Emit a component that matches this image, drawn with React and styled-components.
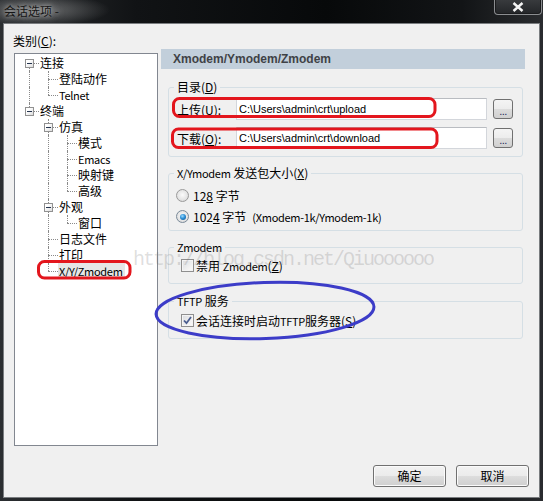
import styled, { createGlobalStyle } from "styled-components";

const GlobalStyle = createGlobalStyle`
  html, body {
    margin: 0;
    padding: 0;
  }
  body {
    width: 543px;
    height: 501px;
    overflow: hidden;
    background: #15181b;
    font-family: "Noto Sans CJK SC", "Liberation Sans", sans-serif;
    font-size: 12px;
    color: #000;
  }
`;

const treeItems = [
  { label: "连接", depth: 0, expander: true, guides: [], pos: "first" },
  { label: "登陆动作", depth: 1, guides: [true], pos: "mid" },
  { label: "Telnet", depth: 1, guides: [true], pos: "last", latin: true },
  { label: "终端", depth: 0, expander: true, guides: [], pos: "last" },
  { label: "仿真", depth: 1, expander: true, guides: [false], pos: "mid" },
  { label: "模式", depth: 2, guides: [false, true], pos: "mid" },
  { label: "Emacs", depth: 2, guides: [false, true], pos: "mid", latin: true },
  { label: "映射键", depth: 2, guides: [false, true], pos: "mid" },
  { label: "高级", depth: 2, guides: [false, true], pos: "last" },
  { label: "外观", depth: 1, expander: true, guides: [false], pos: "mid" },
  { label: "窗口", depth: 2, guides: [false, true], pos: "last" },
  { label: "日志文件", depth: 1, guides: [false], pos: "mid" },
  { label: "打印", depth: 1, guides: [false], pos: "mid" },
  { label: "X/Y/Zmodem", depth: 1, guides: [false], pos: "last", latin: true, selected: true },
];

const Window = styled.div`
  position: relative;
  width: 543px;
  height: 501px;
  display: flex;
  flex-direction: column;
  background: linear-gradient(90deg, #2b2e31 0%, #111315 25%, #07090a 60%, #121416 85%, #2a2c2f 100%);
`;

const TitleBar = styled.div`
  height: 23px;
  display: flex;
  align-items: flex-start;
  background: radial-gradient(ellipse 70px 16px at 40px 10px, rgba(200, 200, 200, 0.45), rgba(200, 200, 200, 0) 100%);
`;

const Title = styled.div`
  margin: 2px 0 0 4px;
  line-height: 17px;
  font-size: 12px;
  color: #161616;
  text-shadow: 0 0 4px rgba(220, 220, 220, 0.7), 0 0 8px rgba(200, 200, 200, 0.6);
`;

const CloseButton = styled.div`
  margin: -1px 1px 0 auto;
  width: 46px;
  height: 15px;
  border: 1px solid #8b8d90;
  border-top: none;
  border-radius: 0 0 4px 4px;
  background: linear-gradient(#3a3c3f, #232528);
  box-shadow: inset 0 0 0 1px #1a1b1d;
  display: flex;
  justify-content: center;
  align-items: center;
`;

const Client = styled.div`
  box-sizing: border-box;
  margin: 0 3px;
  width: 537px;
  height: 475px;
  border: 1px solid #7a7d80;
  background: #f0f0f0;
  display: flex;
  flex-direction: column;
  padding: 9px 0 10px 0;
`;

const Body = styled.div`
  display: flex;
  padding-left: 10px;
`;

const LeftCol = styled.div`
  width: 144px;
  display: flex;
  flex-direction: column;
`;

const CategoryLabel = styled.div`
  height: 16px;
  line-height: 16px;
  margin: 0 0 4px -1px;
`;

const Tree = styled.div`
  box-sizing: border-box;
  width: 144px;
  height: 393px;
  border: 1px solid #828790;
  background: #fff;
  padding: 1px 0 0 5px;
`;

const TreeRow = styled.div`
  display: flex;
  height: 16px;
`;

const Guide = styled.div`
  position: relative;
  width: 19px;
  height: 16px;
  flex: none;
  &::before {
    content: "";
    display: ${(p) => (p.$line ? "block" : "none")};
    position: absolute;
    left: 9px;
    top: 0;
    bottom: 0;
    border-left: 1px dotted #8a8a8a;
  }
`;

const Connector = styled.div`
  position: relative;
  width: 19px;
  height: 16px;
  flex: none;
  &::before {
    content: "";
    position: absolute;
    left: 9px;
    top: ${(p) => (p.$pos === "first" ? "8px" : "0")};
    height: ${(p) => (p.$pos === "mid" ? "16px" : "8px")};
    border-left: 1px dotted #8a8a8a;
  }
  &::after {
    content: "";
    position: absolute;
    left: 9px;
    right: 0;
    top: 8px;
    border-top: 1px dotted #8a8a8a;
  }
`;

const Expander = styled.div`
  position: absolute;
  z-index: 1;
  left: 5px;
  top: 4px;
  box-sizing: border-box;
  width: 9px;
  height: 9px;
  border: 1px solid #919191;
  background: linear-gradient(135deg, #ffffff 30%, #dcdcdc);
  &::after {
    content: "";
    position: absolute;
    left: 1px;
    top: 3px;
    width: 5px;
    height: 1px;
    background: #25344f;
  }
`;

const TreeLabel = styled.span`
  line-height: 16px;
  padding: 0 2px 0 1px;
  white-space: nowrap;
  background: ${(p) => (p.$selected ? "#e6e6e6" : "transparent")};
`;

/* Latin runs: the dialog font is narrower for Latin than for CJK */
const Lat = styled.span`
  font-size: 11px;
  letter-spacing: -0.3px;
`;

const RightCol = styled.div`
  width: 364px;
  margin: 16px 0 0 3px;
  display: flex;
  flex-direction: column;
`;

const Header = styled.div`
  height: 20px;
  line-height: 20px;
  background: #c2cfdb;
  padding-left: 12px;
  font-family: "Liberation Sans", sans-serif;
  font-weight: bold;
  font-size: 12px;
  color: #3f4246;
`;

const Group = styled.fieldset`
  margin: ${(p) => p.$top}px 2px 0 7px;
  border: 1px solid #d5dfe5;
  border-radius: 3px;
  padding: ${(p) => p.$pt}px 5px ${(p) => p.$pb}px 5px;
  min-inline-size: 0;
`;

const Legend = styled.legend`
  padding: 0 3px;
  line-height: 16px;
  font-size: 12px;
`;

const Mn = styled.span`
  text-decoration: underline;
`;

const PathRow = styled.div`
  display: flex;
  align-items: center;
  height: 22px;
  padding-left: 3px;
  & + & {
    margin-top: 7px;
  }
`;

const PathLabel = styled.div`
  width: 59px;
  flex: none;
`;

const PathInput = styled.input`
  box-sizing: border-box;
  width: 251px;
  height: 22px;
  margin: 0;
  border: 1px solid #d3d6db;
  border-top-color: #b9bcc1;
  padding: 0 0 0 2px;
  background: #fff;
  font-family: "Liberation Sans", sans-serif;
  font-size: 11px;
  color: #000;
  outline: none;
`;

const BrowseButton = styled.div`
  box-sizing: border-box;
  width: 20px;
  height: 20px;
  margin-left: 6px;
  border: 1px solid #707070;
  border-radius: 3px;
  background: linear-gradient(#f4f4f4 0%, #ececec 50%, #dcdcdc 51%, #d0d0d0 100%);
  display: flex;
  justify-content: center;
  align-items: flex-end;
  font-family: "Liberation Sans", sans-serif;
  font-size: 11px;
  line-height: 14px;
  letter-spacing: -0.5px;
  color: #1b2a5a;
`;

const OptionRow = styled.div`
  display: flex;
  align-items: center;
  height: ${(p) => p.$h}px;
  padding-left: ${(p) => p.$indent}px;
  gap: ${(p) => p.$gap}px;
  white-space: nowrap;
`;

const Radio = styled.div`
  position: relative;
  box-sizing: border-box;
  width: 13px;
  height: 13px;
  border-radius: 50%;
  border: 1px solid ${(p) => (p.$checked ? "#7a8a99" : "#9a9a9a")};
  background: radial-gradient(circle at 50% 45%, #fbfbfb 0%, #e6e6e6 55%, #cfcfcf 100%);
  &::after {
    content: "";
    display: ${(p) => (p.$checked ? "block" : "none")};
    position: absolute;
    left: 2.5px;
    top: 2.5px;
    width: 6px;
    height: 6px;
    border-radius: 50%;
    background: radial-gradient(circle at 40% 35%, #9fdcff 0%, #2b8fd6 45%, #0d4b86 100%);
  }
`;

const Check = styled.div`
  box-sizing: border-box;
  width: 13px;
  height: 13px;
  border: 1px solid #8f8f8f;
  background: linear-gradient(135deg, #d9dbdf 0%, #f3f3f3 70%, #fbfbfb 100%);
  box-shadow: inset 0 0 0 1px #f4f4f4;
  display: flex;
  justify-content: center;
  align-items: center;
`;

const Hint = styled(Lat)`
  margin-left: 6px;
`;

const Footer = styled.div`
  margin-top: auto;
  display: flex;
  justify-content: flex-end;
  gap: 10px;
  padding-right: 10px;
`;

const DialogButton = styled.div`
  box-sizing: border-box;
  width: 73px;
  height: 22px;
  border: 1px solid #707070;
  border-radius: 3px;
  background: linear-gradient(#f2f2f2 0%, #ebebeb 50%, #dddddd 51%, #cfcfcf 100%);
  box-shadow: inset 0 0 0 1px #fbfbfb;
  display: flex;
  justify-content: center;
  align-items: center;
  line-height: 20px;
`;

const Marks = styled.svg`
  position: absolute;
  left: 0;
  top: 0;
  pointer-events: none;
`;

const Watermark = styled.div`
  position: absolute;
  left: 133px;
  top: 250px;
  font-family: "Liberation Mono", monospace;
  font-size: 20px;
  line-height: 20px;
  letter-spacing: -2px;
  color: rgba(110, 110, 110, 0.22);
  white-space: nowrap;
  pointer-events: none;
`;

function TreeItem({ item }) {
  return (
    <TreeRow>
      {item.guides.map((line, i) => (
        <Guide key={i} $line={line} />
      ))}
      <Connector $pos={item.pos}>{item.expander && <Expander />}</Connector>
      <TreeLabel $selected={item.selected}>
        {item.latin ? <Lat>{item.label}</Lat> : item.label}
      </TreeLabel>
    </TreeRow>
  );
}

function CheckMark() {
  return (
    <svg width="9" height="9" viewBox="0 0 9 9">
      <path d="M1 4.5 L3.5 7.2 L8 1" fill="none" stroke="#4a5d8f" strokeWidth="1.8" />
    </svg>
  );
}

export default function App() {
  return (
    <Window>
      <GlobalStyle />
      <TitleBar>
        <Title>会话选项 -</Title>
        <CloseButton>
          <svg width="12" height="10" viewBox="0 0 12 10">
            <path d="M1.5 1 L10.5 9 M10.5 1 L1.5 9" stroke="#f4f4f4" strokeWidth="2.4" />
          </svg>
        </CloseButton>
      </TitleBar>

      <Client>
        <Body>
          <LeftCol>
            <CategoryLabel>
              类别(<Mn>C</Mn>):
            </CategoryLabel>
            <Tree>
              {treeItems.map((item) => (
                <TreeItem key={item.label} item={item} />
              ))}
            </Tree>
          </LeftCol>

          <RightCol>
            <Header>Xmodem/Ymodem/Zmodem</Header>

            <Group $top={10} $pt={3} $pb={7}>
              <Legend>
                目录(<Mn>D</Mn>)
              </Legend>
              <PathRow>
                <PathLabel>
                  上传(<Mn>U</Mn>):
                </PathLabel>
                <PathInput readOnly defaultValue="C:\Users\admin\crt\upload" />
                <BrowseButton>...</BrowseButton>
              </PathRow>
              <PathRow>
                <PathLabel>
                  下载(<Mn>O</Mn>):
                </PathLabel>
                <PathInput readOnly defaultValue="C:\Users\admin\crt\download" />
                <BrowseButton>...</BrowseButton>
              </PathRow>
            </Group>

            <Group $top={8} $pt={4} $pb={3}>
              <Legend>
                <Lat>X/Ymodem</Lat> 发送包大小(<Mn>X</Mn>)
              </Legend>
              <OptionRow $h={21} $indent={2} $gap={4}>
                <Radio />
                <span>
                  12<Mn>8</Mn> 字节
                </span>
              </OptionRow>
              <OptionRow $h={21} $indent={2} $gap={4}>
                <Radio $checked />
                <span>
                  102<Mn>4</Mn> 字节
                  <Hint>(Xmodem-1k/Ymodem-1k)</Hint>
                </span>
              </OptionRow>
            </Group>

            <Group $top={8} $pt={0} $pb={8}>
              <Legend>
                <Lat>Zmodem</Lat>
              </Legend>
              <OptionRow $h={20} $indent={7} $gap={2}>
                <Check />
                <span>
                  禁用 <Lat>Zmodem</Lat>(<Mn>Z</Mn>)
                </span>
              </OptionRow>
            </Group>

            <Group $top={9} $pt={1} $pb={8}>
              <Legend>
                <Lat>TFTP</Lat> 服务
              </Legend>
              <OptionRow $h={20} $indent={7} $gap={2}>
                <Check>
                  <CheckMark />
                </Check>
                <span>
                  会话连接时启动<Lat>TFTP</Lat>服务器(<Mn>S</Mn>)
                </span>
              </OptionRow>
            </Group>
          </RightCol>
        </Body>

        <Footer>
          <DialogButton>确定</DialogButton>
          <DialogButton>取消</DialogButton>
        </Footer>
      </Client>

      <Watermark>http://blog.csdn.net/Qiuoooooo</Watermark>

      <Marks width="543" height="501" viewBox="0 0 543 501">
        <g fill="none" stroke="#e3161d" strokeWidth="3">
          <rect x="173.5" y="98.5" width="261.5" height="18" rx="6" />
          <rect x="172.5" y="129" width="264.5" height="18.5" rx="6" />
          <rect x="38.5" y="261.5" width="91.5" height="16.5" rx="6" />
        </g>
        <ellipse
          cx="265"
          cy="310.5"
          rx="109"
          ry="28"
          transform="rotate(-2 265 310.5)"
          fill="none"
          stroke="#3c3cc8"
          strokeWidth="3"
        />
      </Marks>
    </Window>
  );
}
